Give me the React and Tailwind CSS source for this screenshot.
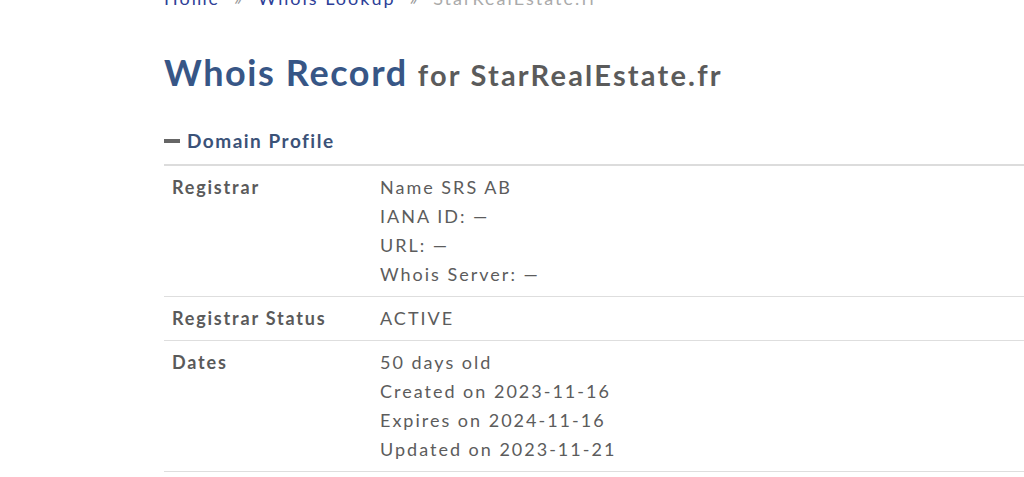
import React from 'react'

const rows = [
  { label: 'Registrar', values: ['Name SRS AB', 'IANA ID: —', 'URL: —', 'Whois Server: —'] },
  { label: 'Registrar Status', values: ['ACTIVE'] },
  {
    label: 'Dates',
    values: ['50 days old', 'Created on 2023-11-16', 'Expires on 2024-11-16', 'Updated on 2023-11-21'],
  },
]

export default function App() {
  return (
    <div className="h-[477px] w-full overflow-hidden bg-white font-['Lato',sans-serif] text-[#555]">
      <div className="pl-[164px]">
        {/* breadcrumb, scrolled partly out of view */}
        <nav className="-mt-[14px] flex items-center gap-[14px] text-[18px] leading-[24px] tracking-[2px]">
          <span className="text-[#2e3f98]">Home</span>
          <span className="text-[#999]">»</span>
          <span className="text-[#2e3f98]">Whois Lookup</span>
          <span className="text-[#999]">»</span>
          <span className="text-[#aaa]">StarRealEstate.fr</span>
        </nav>

        <h1 className="mt-[40px] flex items-baseline gap-[10px] leading-[44px]">
          <span className="text-[36px] font-bold tracking-[1.6px] text-[#375686]">Whois Record</span>
          <span className="text-[29px] font-bold tracking-[2.2px] text-[#5b5b5b]">for StarRealEstate.fr</span>
        </h1>

        <div className="mt-[31px] flex items-center gap-[7px] pb-[10px] text-[19px] font-bold leading-[26px] tracking-[1.5px] text-[#3b5278]">
          <span className="block h-[4px] w-[16px] bg-[#666]" />
          <span>Domain Profile</span>
        </div>

        <div className="border-t-2 border-[#dcdcdc]">
          {rows.map((r) => (
            <div key={r.label} className="flex border-b border-[#dedede] py-[7px] text-[18px] leading-[29px]">
              <div className="w-[216px] shrink-0 pl-[8px] font-bold tracking-[1.8px] text-[#5a5a5a]">{r.label}</div>
              <div className="tracking-[2px] text-[#5c5c5c]">
                {r.values.map((v) => (
                  <div key={v}>{v}</div>
                ))}
              </div>
            </div>
          ))}
        </div>
      </div>
    </div>
  )
}
